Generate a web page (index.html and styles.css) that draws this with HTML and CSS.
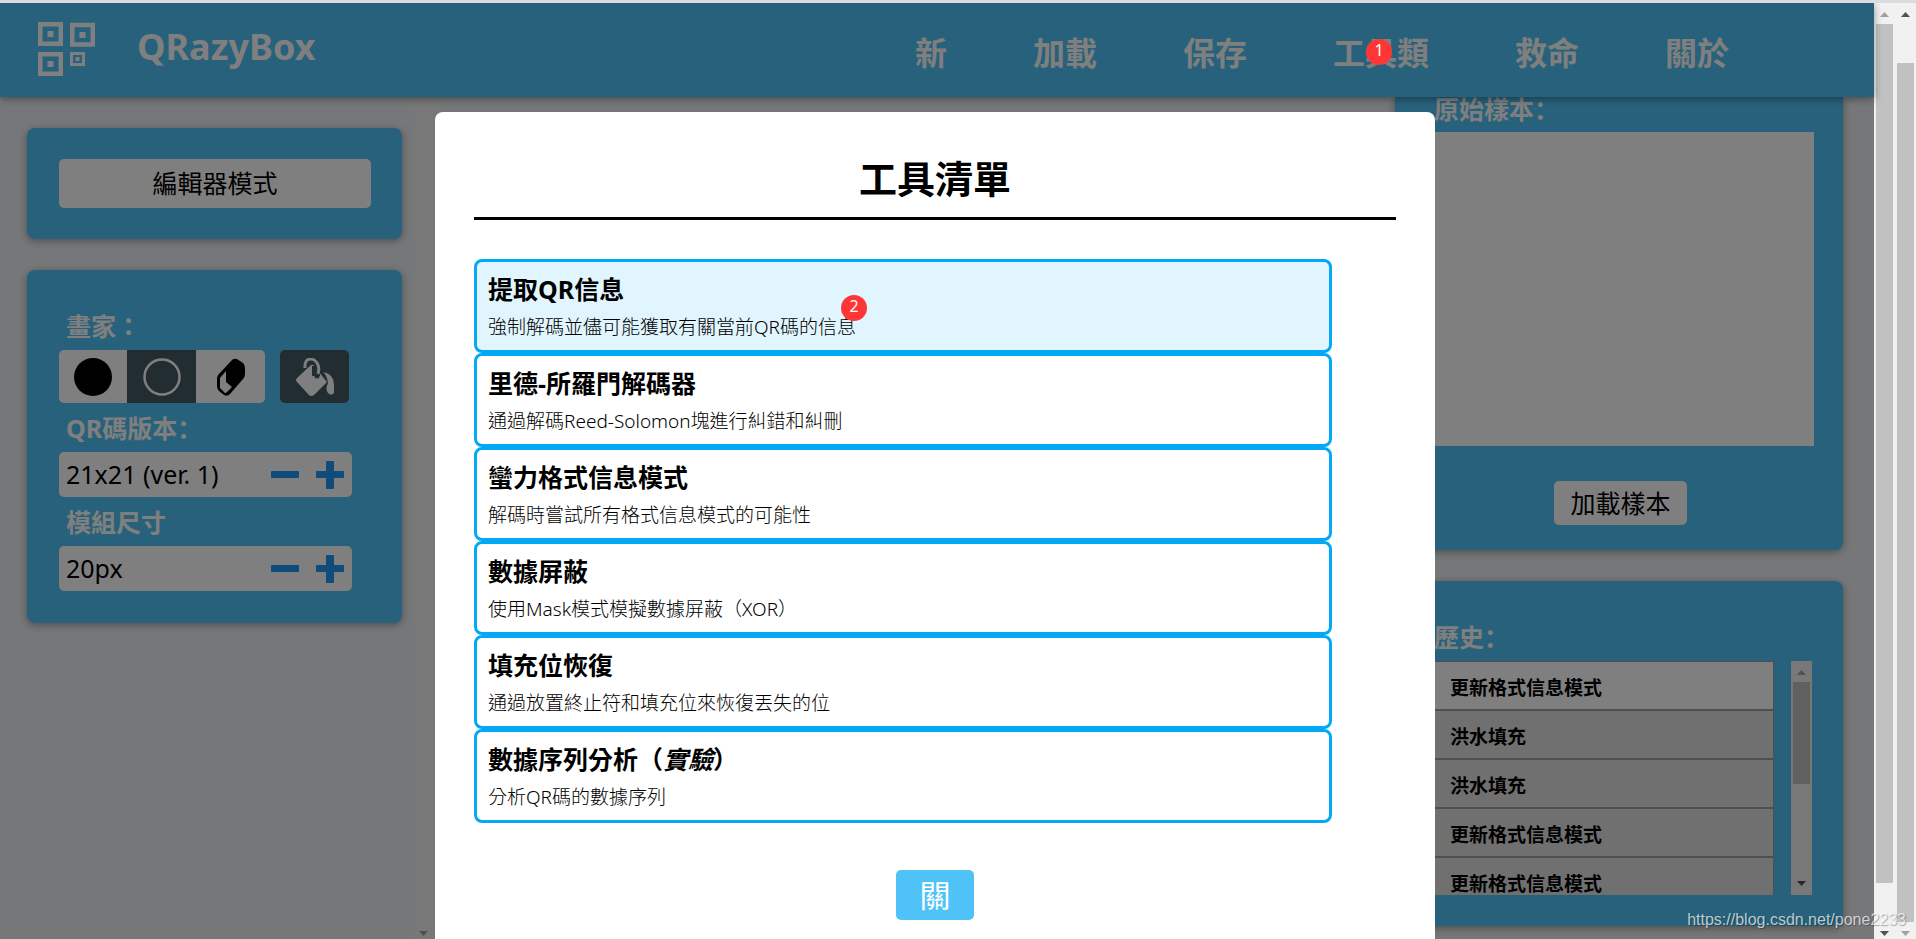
FILE: index.html
```html
<!DOCTYPE html>
<html lang="zh-Hant">
<head>
<meta charset="utf-8">
<title>QRazyBox</title>
<link rel="stylesheet" href="styles.css">
</head>
<body>
<div class="frame">
  <div class="page">
    <header class="header">
      <svg class="logo" viewBox="0 0 57 54" aria-hidden="true">
        <g fill="none" stroke="#fff" stroke-width="4.500">
          <rect x="2.250" y="2.250" width="20.500" height="19.500"/>
          <rect x="34.250" y="3" width="20.500" height="19.500"/>
          <rect x="2.250" y="32.250" width="20.500" height="19.500"/>
          <rect x="33.500" y="31.500" width="12" height="11" stroke-width="3"/>
        </g>
        <g fill="#fff">
          <rect x="9.500" y="9" width="6" height="6"/>
          <rect x="41.500" y="10" width="6" height="6"/>
          <rect x="9.500" y="39" width="6" height="6"/>
          <rect x="37.500" y="35" width="4" height="4"/>
        </g>
      </svg>
      <h1 class="brand">QRazyBox</h1>
      <nav class="nav">
        <button class="nav-item">新</button>
        <button class="nav-item">加載</button>
        <button class="nav-item">保存</button>
        <button class="nav-item">工具類</button>
        <button class="nav-item">救命</button>
        <button class="nav-item">關於</button>
      </nav>
    </header>

    <main class="workspace">
      <div class="side-left">
        <div class="left-panels">
          <section class="panel">
            <button class="btn btn-wide">編輯器模式</button>
          </section>
          <section class="panel panel-tools">
            <h2 class="label">畫家：</h2>
            <div class="tools">
              <div class="tool-group">
                <button class="tool" aria-label="黑色"><svg width="38" height="38" viewBox="0 0 38 38"><circle cx="19" cy="19" r="19"/></svg></button>
                <button class="tool tool-on" aria-label="白色"><svg width="38" height="38" viewBox="0 0 38 38"><circle cx="19" cy="19" r="17.500" fill="none" stroke="#fff" stroke-width="2.500"/></svg></button>
                <button class="tool" aria-label="橡皮擦"><svg width="38" height="38" viewBox="0 0 38 38"><path d="M6 17 20 2q2-2 5-1l6 4q2 2 2 5v6q0 3-2 5L18 36q-3 3-6 1l-5-4q-2-2-2-5v-7q0-2 1-4z"/><path d="M8 20 14 13v11l6 5-5 5q-2 2-3 0l-4-4z" fill="#fff"/></svg></button>
              </div>
              <button class="tool tool-on tool-fill" aria-label="填充"><svg width="38" height="38" viewBox="0 0 38 38"><path d="M15 7 1 20q-2 2 0 4l12 13q2 2 5 0l13-13-13-16q-1-2-3-1z" fill="#fff"/><path d="M20 8v10" stroke="#455a64" stroke-width="8"/><path d="M9 10C8-2 19-1 22 7q2 5-1 11" fill="none" stroke="#fff" stroke-width="3"/><circle cx="21" cy="18" r="2.500" fill="#455a64"/><path d="M27 14q11 2 11 13v8q-3 3-6 0-3-4 0-10-1-8-5-11z" fill="#fff"/></svg></button>
            </div>
            <h2 class="label" lang="zh-Hans">QR碼版本：</h2>
            <div class="stepper">
              <output class="value">21x21 (ver. 1)</output>
              <button class="step" aria-label="減少版本"><svg viewBox="0 0 28 28"><rect y="10" width="28" height="7" rx="1"/></svg></button>
              <button class="step" aria-label="增加版本"><svg viewBox="0 0 28 28"><path d="M11 0h6q1 0 1 1v9h9q1 0 1 1v5q0 1-1 1h-9v10q0 1-1 1h-6q-1 0-1-1V17H1q-1 0-1-1v-5q0-1 1-1h9V1q0-1 1-1z"/></svg></button>
            </div>
            <h2 class="label">模組尺寸</h2>
            <div class="stepper">
              <output class="value">20px</output>
              <button class="step" aria-label="減少尺寸"><svg viewBox="0 0 28 28"><rect y="10" width="28" height="7" rx="1"/></svg></button>
              <button class="step" aria-label="增加尺寸"><svg viewBox="0 0 28 28"><path d="M11 0h6q1 0 1 1v9h9q1 0 1 1v5q0 1-1 1h-9v10q0 1-1 1h-6q-1 0-1-1V17H1q-1 0-1-1v-5q0-1 1-1h9V1q0-1 1-1z"/></svg></button>
            </div>
          </section>
        </div>
        <div class="bar bar-end"><svg class="arrow" viewBox="0 0 9 5"><path d="M0 0h9L4.500 5z" fill="#a0a0a0"/></svg></div>
      </div>

      <div class="side-right">
        <section class="panel panel-sample">
          <h2 class="label label-tight" lang="zh-Hans">原始樣本：</h2>
          <div class="sample"></div>
          <button class="btn">加載樣本</button>
        </section>
        <section class="panel panel-history">
          <h2 class="label" lang="zh-Hans">歷史：</h2>
          <div class="history">
            <ul class="history-list">
              <li class="entry entry-on">更新格式信息模式</li>
              <li class="entry">洪水填充</li>
              <li class="entry">洪水填充</li>
              <li class="entry">更新格式信息模式</li>
              <li class="entry">更新格式信息模式</li>
            </ul>
            <div class="bar">
              <svg class="arrow" viewBox="0 0 9 5"><path d="M0 5h9L4.500 0z" fill="#a0a0a0"/></svg>
              <div class="thumb thumb-history"></div>
              <svg class="arrow arrow-down" viewBox="0 0 9 5"><path d="M0 0h9L4.500 5z" fill="#505050"/></svg>
            </div>
          </div>
        </section>
      </div>
    </main>

    <div class="overlay">
      <div class="modal" role="dialog" aria-labelledby="tools-title">
        <h2 class="modal-title" id="tools-title">工具清單</h2>
        <div class="tool-list">
          <button class="item item-on"><strong class="item-name">提取QR信息</strong><span class="item-text">強制解碼並儘可能獲取有關當前QR碼的信息</span></button>
          <button class="item"><strong class="item-name">里德-所羅門解碼器</strong><span class="item-text">通過解碼Reed-Solomon塊進行糾錯和糾刪</span></button>
          <button class="item"><strong class="item-name">蠻力格式信息模式</strong><span class="item-text">解碼時嘗試所有格式信息模式的可能性</span></button>
          <button class="item"><strong class="item-name">數據屏蔽</strong><span class="item-text">使用Mask模式模擬數據屏蔽（XOR）</span></button>
          <button class="item"><strong class="item-name">填充位恢復</strong><span class="item-text">通過放置終止符和填充位來恢復丟失的位</span></button>
          <button class="item"><strong class="item-name">數據序列分析（<em>實驗</em>）</strong><span class="item-text">分析QR碼的數據序列</span></button>
        </div>
        <button class="close">關</button>
        <span class="badge badge-two">2</span>
      </div>
    </div>
    <span class="badge badge-one">1</span>
  </div>

  <div class="bar">
    <svg class="arrow" viewBox="0 0 9 5"><path d="M0 5h9L4.500 0z" fill="#a0a0a0"/></svg>
    <div class="thumb thumb-inner"></div>
    <svg class="arrow arrow-down" viewBox="0 0 9 5"><path d="M0 0h9L4.500 5z" fill="#505050"/></svg>
  </div>
  <div class="bar">
    <svg class="arrow" viewBox="0 0 9 5"><path d="M0 5h9L4.500 0z" fill="#505050"/></svg>
    <div class="thumb thumb-outer"></div>
    <svg class="arrow arrow-down" viewBox="0 0 9 5"><path d="M0 0h9L4.500 5z" fill="#a0a0a0"/></svg>
  </div>
  <span class="watermark">https://blog.csdn.net/pone2233</span>
</div>
</body>
</html>
```
FILE: styles.css
```css
* { box-sizing: border-box; }
body {
  margin: 0;
  font-family: "Noto Sans", "Noto Sans CJK TC", sans-serif;
  font-size: 25px;
  color: #000;
}
:lang(zh-Hans) { font-family: "Noto Sans", "Noto Sans CJK SC", sans-serif; }
button {
  font: inherit;
  color: inherit;
  border: 0;
  padding: 0;
  background: none;
  cursor: pointer;
}
h1, h2, ul { margin: 0; padding: 0; }
svg { display: block; }

.frame {
  position: relative;
  display: flex;
  height: 100vh;
  border-top: 3px solid #dadce0;
  overflow: hidden;
}
.page {
  position: relative;
  flex: 1;
  display: flex;
  flex-direction: column;
  min-width: 0;
  background: #eceff1;
}

.header {
  position: relative;
  z-index: 1;
  display: flex;
  align-items: center;
  height: 94px;
  flex: none;
  padding: 0 145px 0 38px;
  background: #4fc3f7;
  color: #fff;
  box-shadow: 0 2px 8px rgba(0, 0, 0, .4);
}
.logo { width: 57px; height: 54px; margin-bottom: 2px; }
.brand {
  margin-left: 42px;
  padding-bottom: 6px;
  font-size: 36px;
  line-height: 48px;
  font-weight: 700;
}
.nav { display: flex; gap: 86px; margin-left: auto; padding-top: 6px; }
.nav-item { font-size: 32px; line-height: 40px; font-weight: 700; }

.workspace {
  flex: 1;
  display: flex;
  justify-content: space-between;
  min-height: 0;
}
.side-left { display: flex; width: 434px; }
.left-panels {
  flex: 1;
  display: flex;
  flex-direction: column;
  gap: 31px;
  padding: 31px 11px 0 27px;
}
.panel {
  padding: 31px 31px 31px 32px;
  background: #4fc3f7;
  border-radius: 8px;
  box-shadow: 0 2px 8px rgba(0, 0, 0, .35);
}
.panel-tools { padding-bottom: 32px; }
.label {
  height: 49px;
  padding-left: 7px;
  font-size: 25px;
  line-height: 51px;
  font-weight: 700;
  color: #fff;
}
.label-tight { height: 25px; line-height: 25px; margin-bottom: 10px; }
.btn {
  height: 44px;
  padding: 0 16px;
  background: #fff;
  border-radius: 5px;
  line-height: 44px;
}
.btn-wide { display: block; width: 100%; height: 49px; line-height: 49px; }

.tools { display: flex; gap: 15px; }
.tool-group { display: flex; border-radius: 5px; overflow: hidden; }
.tool {
  display: flex;
  align-items: center;
  justify-content: center;
  width: 69px;
  height: 53px;
  background: #fff;
}
.tool:first-child { width: 68px; }
.tool-on { background: #455a64; }
.tool-fill { border-radius: 5px; }
.stepper {
  display: flex;
  align-items: center;
  gap: 17px;
  width: 293px;
  height: 45px;
  padding: 0 8px 0 7px;
  background: #fff;
  border-radius: 5px;
}
.value { flex: 1; line-height: 34px; padding-bottom: 2px; }
.step { width: 28px; height: 28px; }
.step svg { fill: #2196f3; }

.side-right {
  display: flex;
  flex-direction: column;
  gap: 31px;
  width: 479px;
  padding-right: 31px;
}
.panel-sample {
  padding: 0 29px 25px 32px;
  border-radius: 0 0 8px 8px;
  text-align: center;
}
.panel-sample .label { text-align: left; }
.sample { height: 314px; margin-bottom: 35px; background: #fff; }
.panel-sample .btn { vertical-align: top; }
.history { display: flex; gap: 17px; height: 234px; }
.history-list { flex: 1; overflow: hidden; list-style: none; }
.entry {
  height: 49px;
  padding: 4px 0 0 22px;
  border: 1px solid #9e9e9e;
  background: #e0e0e0;
  font-size: 19px;
  line-height: 44px;
  font-weight: 700;
}
.entry-on { background: #fff; }

.bar {
  display: flex;
  flex-direction: column;
  align-items: center;
  flex: none;
  width: 21px;
  padding: 9px 0 3px;
  background: #f1f1f1;
}
.bar-end { justify-content: flex-end; }
.arrow { width: 9px; height: 5px; flex: none; }
.arrow-down { margin-top: auto; }
.thumb { width: 17px; flex: none; background: #c1c1c1; }
.thumb-inner { height: 93%; margin-top: 7px; }
.thumb-outer { height: 93%; margin-top: 46px; margin-bottom: -6px; }
.thumb-history { height: 102px; margin-top: 7px; }
.history .bar { padding-bottom: 9px; }

.overlay {
  position: absolute;
  inset: 0;
  z-index: 2;
  display: flex;
  justify-content: center;
  align-items: flex-start;
  padding: 109px 4px 0 0;
  background: rgba(0, 0, 0, .5);
  overflow: hidden;
}
.modal {
  position: relative;
  width: 1000px;
  padding: 39px 39px 60px;
  background: #fff;
  border-radius: 8px;
  text-align: center;
}
.modal-title {
  padding-bottom: 12px;
  border-bottom: 3px solid #000;
  font-size: 38px;
  line-height: 54px;
}
.tool-list { width: 858px; margin: 39px 0 47px; }
.item {
  display: flex;
  flex-direction: column;
  width: 100%;
  height: 94px;
  padding: 9px 11px 3px;
  border: 3px solid #03a9f4;
  border-radius: 8px;
  text-align: left;
}
.item-on { background: #e1f5fe; }
.item-name { line-height: 36px; }
.item-text { font-size: 19px; line-height: 40px; font-weight: 300; }
.close {
  width: 78px;
  height: 50px;
  background: #4fc3f7;
  border-radius: 5px;
  color: #fff;
  font-size: 31px;
  line-height: 50px;
}

.badge {
  position: absolute;
  z-index: 3;
  width: 26px;
  height: 26px;
  border-radius: 50%;
  background: #ff3636;
  color: #fff;
  font-size: 16px;
  line-height: 23px;
  text-align: center;
}
.badge-one { top: 36px; right: 482px; }
.badge-two { top: 183px; left: 406px; }
.watermark {
  position: absolute;
  right: 10px;
  bottom: 9px;
  z-index: 4;
  font: 16px/20px "Liberation Sans", sans-serif;
  color: rgba(255, 255, 255, .7);
  text-shadow: 1px 1px 1px rgba(0, 0, 0, .3);
}
```
